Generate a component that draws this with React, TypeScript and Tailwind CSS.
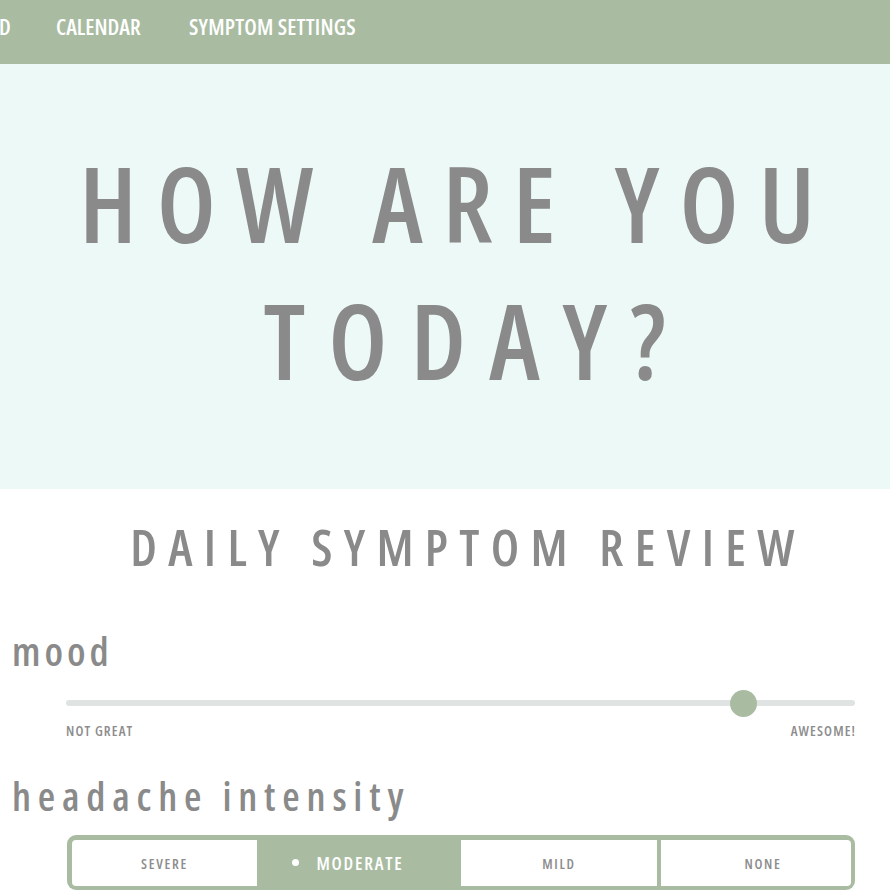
const F = "font-['Open_Sans',sans-serif] [font-stretch:75%]";

export default function App() {
  return (
    <div className={`${F} w-[890px] h-[892px] overflow-hidden bg-white`}>
      {/* nav */}
      <nav className="h-[64px] bg-[#a9bca2] pt-[10px] flex items-start text-white text-[22px] leading-[32px] font-semibold whitespace-nowrap overflow-hidden">
        <span className="w-[57px] -ml-[1px]">D</span>
        <span className="w-[133px]">CALENDAR</span>
        <span className="tracking-[0.01em]">SYMPTOM SETTINGS</span>
      </nav>

      {/* hero */}
      <section className="bg-[#ecf9f7] pt-[70px] pb-[81px] text-[#8a8a8a] font-semibold text-[104px] leading-[137px] text-center whitespace-nowrap">
        <div className="tracking-[20px] pl-[24px]">HOW ARE YOU</div>
        <div className="tracking-[23px] pl-[62px]">TODAY?</div>
      </section>

      {/* review */}
      <section className="pt-[28px] text-[#8a8a8a]">
        <h2 className="text-[50px] leading-[60px] font-semibold tracking-[11.3px] text-center pl-[46px] whitespace-nowrap">
          DAILY SYMPTOM REVIEW
        </h2>

        <div className="mt-[50px] pl-[12px] text-[40px] leading-[48px] font-semibold tracking-[0.1em]">mood</div>

        <div className="mt-[14px] ml-[66px] w-[789px] h-[28px] relative flex items-center">
          <div className="w-full h-[6px] rounded-full bg-[#dfe3e1]" />
          <div className="absolute left-[664px] top-[0.5px] w-[27px] h-[27px] rounded-full bg-[#a9bca2]" />
        </div>

        <div className="mt-[6px] ml-[66px] w-[789px] flex justify-between text-[14px] leading-[16px] font-semibold tracking-[0.08em] text-[#8d8d8d]">
          <span>NOT GREAT</span>
          <span className="-mr-[0.08em]">AWESOME!</span>
        </div>

        <div className="mt-[33px] pl-[12px] text-[40px] leading-[48px] font-semibold tracking-[0.17em] whitespace-nowrap">headache intensity</div>

        <div className="mt-[15px] ml-[67px] w-[788px] h-[55px] rounded-[9px] bg-[#a9bca2] p-[5px] pr-[4px] pb-[4px] flex gap-[4px]">
          <div className="w-[185px] rounded-l-[4px] bg-white flex items-center justify-center text-[14px] font-semibold tracking-[0.12em] text-[#8d8d8d]">SEVERE</div>
          <div className="w-[196px] flex items-center justify-center gap-[17px] pr-[22px] text-[18px] font-semibold tracking-[0.1em] text-white">
            <span className="w-[7px] h-[7px] rounded-full bg-white mb-[2px]" />
            <span>MODERATE</span>
          </div>
          <div className="w-[196px] bg-white flex items-center justify-center text-[14px] font-semibold tracking-[0.12em] text-[#8d8d8d]">MILD</div>
          <div className="flex-1 rounded-r-[4px] bg-white flex items-center justify-center pl-[14px] text-[14px] font-semibold tracking-[0.12em] text-[#8d8d8d]">NONE</div>
        </div>
      </section>
    </div>
  );
}
